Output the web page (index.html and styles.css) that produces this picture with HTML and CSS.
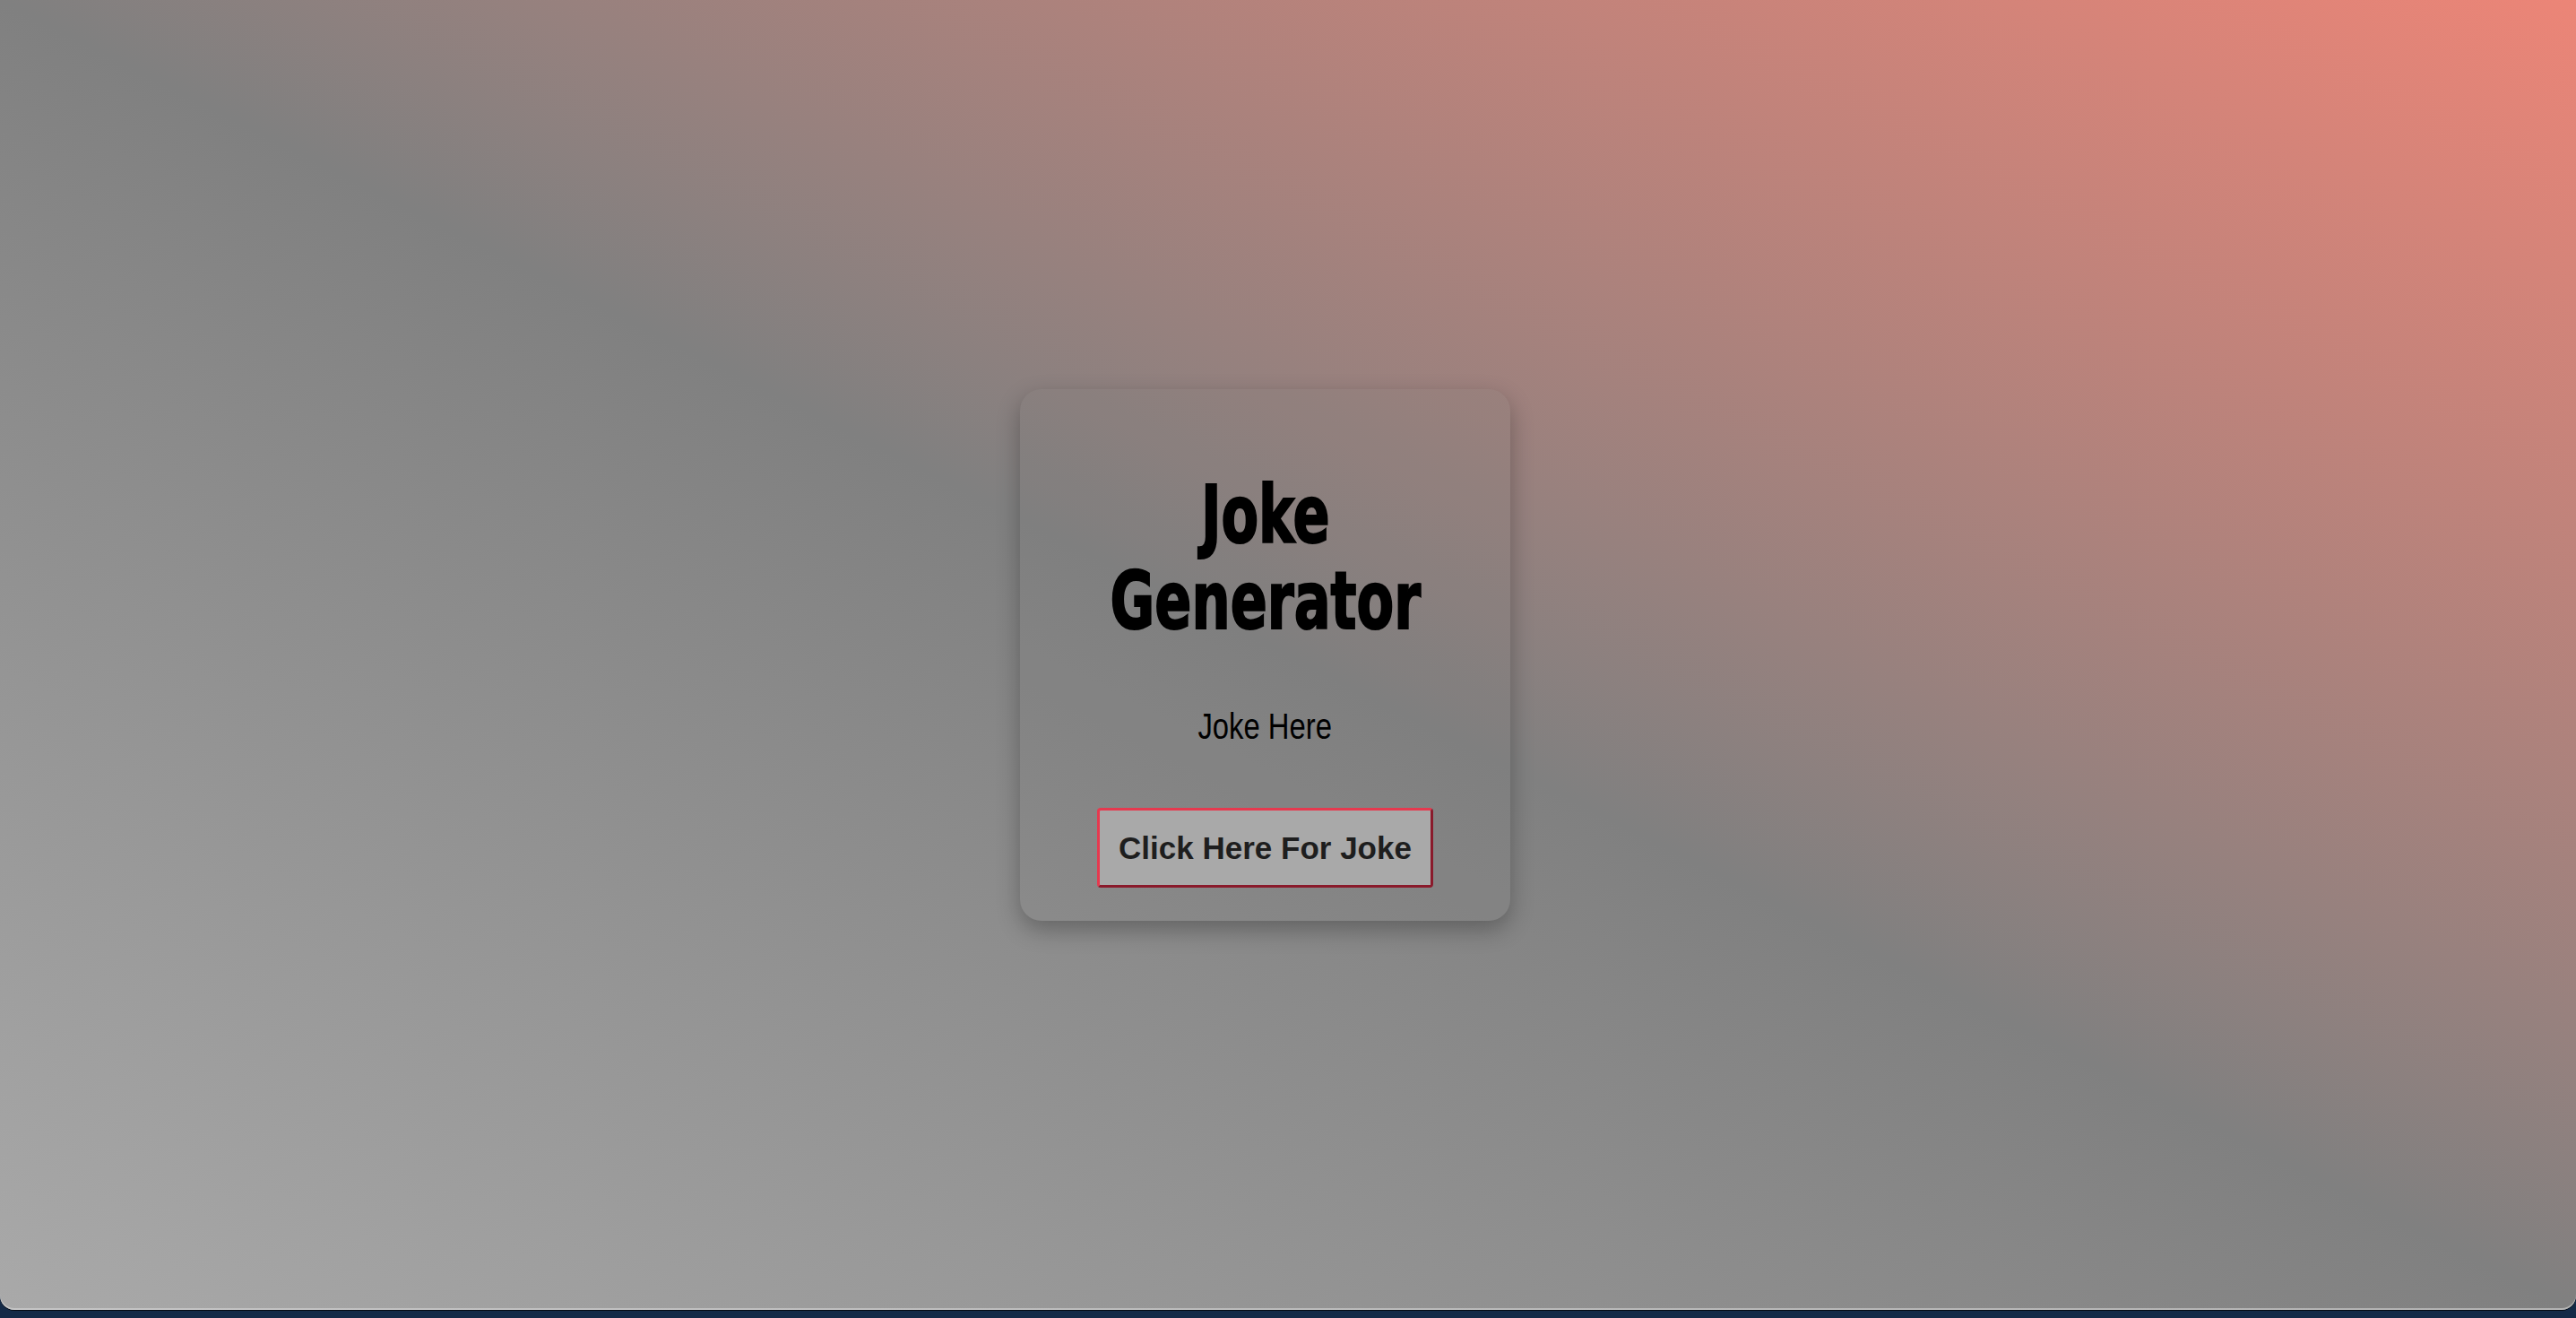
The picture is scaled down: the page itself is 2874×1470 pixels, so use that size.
FILE: index.html
```html
<!DOCTYPE html>
<html lang="en">
<head>
<meta charset="utf-8">
<title>Joke Generator</title>
<link rel="stylesheet" href="styles.css">
</head>
<body>
<div class="window">
  <main class="card">
    <h1 class="title">Joke Generator</h1>
    <p class="joke">Joke Here</p>
    <button class="joke-btn" type="button">Click Here For Joke</button>
  </main>
</div>
</body>
</html>
```

FILE: styles.css
```css
html {
  background: linear-gradient(to bottom, #1d3d63, #142a47);
}
body {
  margin: 0;
  height: 1470px;
  overflow: hidden;
}
.window {
  height: 1461px;
  box-sizing: border-box;
  padding-right: 51px;
  border-radius: 0 0 16px 16px;
  background: linear-gradient(to top right, #a9a9a9 0%, #808080 50%, #ec8577 100%);
  box-shadow: inset 0 -2px 0 rgba(220, 220, 220, 0.55), 0 1px 0 rgba(0, 0, 0, 0.7);
  display: flex;
  align-items: center;
  justify-content: center;
}
.card {
  width: 547px;
  box-sizing: border-box;
  padding: 92px 20px 37px;
  border-radius: 24px;
  background: rgba(120, 120, 120, 0.12);
  box-shadow: 0 10px 26px rgba(0, 0, 0, 0.28);
  display: flex;
  flex-direction: column;
  align-items: center;
  text-align: center;
}
.title {
  margin: 0;
  width: min-content;
  font-family: Impact, "DejaVu Sans Condensed", "DejaVu Sans", sans-serif;
  font-weight: 700;
  font-size: 89px;
  line-height: 96px;
  color: #000;
  -webkit-text-stroke: 2px #000;
  transform: scaleX(0.757);
}
.joke {
  margin: 69px 0 68px;
  font-family: "Liberation Sans", Arial, sans-serif;
  font-size: 40px;
  line-height: 46px;
  color: #000;
  transform: scaleX(0.82);
}
.joke-btn {
  margin: 0;
  padding: 21px 21px;
  font-family: "Liberation Sans", Arial, sans-serif;
  font-weight: 700;
  font-size: 35px;
  line-height: 41px;
  color: #1e1e1e;
  background: #a9a9a9;
  border: 3px solid;
  border-color: #e6394f #8a1a2b #8a1a2b #e6394f;
  border-radius: 4px;
  cursor: pointer;
}
```
